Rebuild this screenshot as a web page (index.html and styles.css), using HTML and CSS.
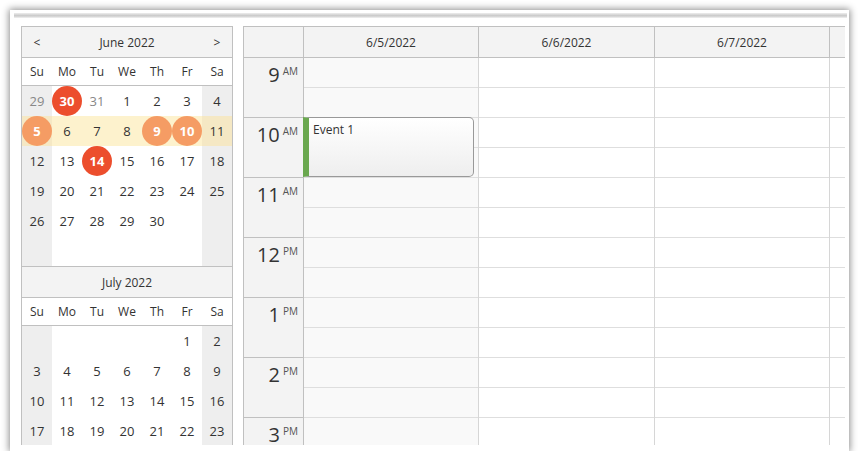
FILE: index.html
```html
<!DOCTYPE html>
<html lang="en">
<head>
  <meta charset="UTF-8" />
  <title>Calendar</title>
  <link rel="stylesheet" href="styles.css">
</head>
<body>

  <div class="frame">
    <div class="top-band"></div>
    <div class="viewport">

      <!-- date navigator -->
      <div class="nav">
        <div class="month">
          <div class="nav-title">
            <span class="arrow">&lt;</span>
            <span class="month-name">June 2022</span>
            <span class="arrow">&gt;</span>
          </div>
          <div class="day-names">
            <span>Su</span><span>Mo</span><span>Tu</span><span>We</span><span>Th</span><span>Fr</span><span>Sa</span>
          </div>
          <div class="week">
            <span class="we other">29</span><span><b class="dot red">30</b></span><span class="other">31</span><span>1</span><span>2</span><span>3</span><span class="we">4</span>
          </div>
          <div class="week sel">
            <span class="we"><b class="dot orange">5</b></span><span>6</span><span>7</span><span>8</span><span><b class="dot orange">9</b></span><span><b class="dot orange">10</b></span><span class="we">11</span>
          </div>
          <div class="week">
            <span class="we">12</span><span>13</span><span><b class="dot red">14</b></span><span>15</span><span>16</span><span>17</span><span class="we">18</span>
          </div>
          <div class="week">
            <span class="we">19</span><span>20</span><span>21</span><span>22</span><span>23</span><span>24</span><span class="we">25</span>
          </div>
          <div class="week">
            <span class="we">26</span><span>27</span><span>28</span><span>29</span><span>30</span><span></span><span class="we"></span>
          </div>
          <div class="week">
            <span class="we"></span><span></span><span></span><span></span><span></span><span></span><span class="we"></span>
          </div>
        </div>

        <div class="month">
          <div class="nav-title">
            <span class="arrow"></span>
            <span class="month-name">July 2022</span>
            <span class="arrow"></span>
          </div>
          <div class="day-names">
            <span>Su</span><span>Mo</span><span>Tu</span><span>We</span><span>Th</span><span>Fr</span><span>Sa</span>
          </div>
          <div class="week">
            <span class="we"></span><span></span><span></span><span></span><span></span><span>1</span><span class="we">2</span>
          </div>
          <div class="week">
            <span class="we">3</span><span>4</span><span>5</span><span>6</span><span>7</span><span>8</span><span class="we">9</span>
          </div>
          <div class="week">
            <span class="we">10</span><span>11</span><span>12</span><span>13</span><span>14</span><span>15</span><span class="we">16</span>
          </div>
          <div class="week">
            <span class="we">17</span><span>18</span><span>19</span><span>20</span><span>21</span><span>22</span><span class="we">23</span>
          </div>
        </div>
      </div>

      <!-- week view -->
      <div class="cal">
        <div class="cal-head corner"></div>
        <div class="cal-head">6/5/2022</div>
        <div class="cal-head">6/6/2022</div>
        <div class="cal-head">6/7/2022</div>
        <div class="cal-head strip"></div>

        <div class="times" id="times"></div>
        <div class="day off" id="day1">
          <div class="event">Event 1</div>
        </div>
        <div class="day" id="day2"></div>
        <div class="day" id="day3"></div>
        <div class="day strip" id="day4"></div>
      </div>

    </div>
  </div>

  <script>
    const hours = [
      ["9", "AM"], ["10", "AM"], ["11", "AM"], ["12", "PM"],
      ["1", "PM"], ["2", "PM"], ["3", "PM"]
    ];

    const times = document.getElementById("times");
    hours.forEach(([h, ap]) => {
      times.innerHTML += `<div class="hour"><span class="h">${h}</span><span class="ampm">${ap}</span></div>`;
    });

    ["day1", "day2", "day3", "day4"].forEach(id => {
      const col = document.getElementById(id);
      for (let i = 0; i < hours.length * 2; i++) {
        col.insertAdjacentHTML("beforeend", '<div class="cell"></div>');
      }
    });
  </script>

</body>
</html>
```

FILE: styles.css
```css
body {
  margin: 0;
  background: #fff;
  font-family: 'Segoe UI', 'Open Sans', sans-serif;
  font-size: 12px;
  color: #333;
}

.frame {
  margin: 10px 0 0 10px;
  width: 839px;
  height: 441px;
  background: #fff;
  box-shadow: 0 0 7px 1px rgba(0, 0, 0, 0.45);
  overflow: hidden;
}

.top-band {
  height: 5px;
  margin: 3px 2px 0 4px;
  background: linear-gradient(to bottom, #eeeeee, #c9c9c9 55%, #f2f2f2);
}

.viewport {
  display: flex;
  gap: 10px;
  margin: 8px 0 0 11px;
  height: 419px;
  overflow: hidden;
}

/* navigator */

.nav {
  width: 210px;
  border: 1px solid #c0c0c0;
  border-bottom: none;
  flex-shrink: 0;
}

.month + .month {
  border-top: 1px solid #c0c0c0;
}

.nav-title {
  display: flex;
  height: 30px;
  align-items: center;
  background: #f3f3f3;
  border-bottom: 1px solid #c0c0c0;
}

.arrow {
  width: 30px;
  text-align: center;
}

.month-name {
  flex: 1;
  text-align: center;
}

.day-names {
  display: flex;
  height: 27px;
  align-items: center;
  border-bottom: 1px solid #c0c0c0;
}

.day-names span,
.week span {
  width: 30px;
  text-align: center;
}

.week {
  display: flex;
  height: 30px;
}

.week span {
  display: flex;
  align-items: center;
  justify-content: center;
  font-size: 13px;
}

.week .we {
  background: #eeeeee;
}

.week .other {
  color: #888;
}

.week.sel {
  background: #fdf2cd;
}

.week.sel .we {
  background: #f5e8c4;
}

.dot {
  display: flex;
  align-items: center;
  justify-content: center;
  width: 30px;
  height: 30px;
  border-radius: 50%;
  color: #fff;
  font-weight: bold;
}

.dot.red {
  background: #ec4e2d;
}

.dot.orange {
  background: #f59c64;
}

/* calendar */

.cal {
  display: grid;
  grid-template-columns: 60px 175px 176px 175px 15px;
  grid-template-rows: 31px auto;
  align-content: start;
  border-left: 1px solid #c0c0c0;
  border-top: 1px solid #c0c0c0;
  flex-shrink: 0;
}

.cal-head {
  display: flex;
  align-items: center;
  justify-content: center;
  background: #f3f3f3;
  border-bottom: 1px solid #c0c0c0;
  border-right: 1px solid #c0c0c0;
}

.cal-head.strip {
  border-right: none;
}

.times {
  background: #f3f3f3;
  border-right: 1px solid #c0c0c0;
}

.hour {
  box-sizing: border-box;
  height: 60px;
  border-bottom: 1px solid #c0c0c0;
  display: flex;
  justify-content: flex-end;
  align-items: flex-start;
  padding: 4px 5px 0 0;
}

.hour .h {
  font-size: 20px;
  line-height: 26px;
}

.hour .ampm {
  font-size: 10px;
  line-height: 14px;
  margin-left: 3px;
  margin-top: 2px;
  color: #555;
}

.day {
  position: relative;
  background: #fff;
  border-right: 1px solid #d6d6d6;
}

.day.off {
  background: #f9f9f9;
}

.day.strip {
  border-right: none;
}

.cell {
  box-sizing: border-box;
  height: 30px;
  border-bottom: 1px solid #dedede;
}

.event {
  position: absolute;
  top: 59px;
  left: -1px;
  width: 171px;
  height: 60px;
  box-sizing: border-box;
  padding: 3px 0 0 4px;
  border: 1px solid #999;
  border-left: 6px solid #6aa84f;
  border-radius: 0 5px 5px 0;
  background: linear-gradient(to bottom, #ffffff, #eeeeee);
  color: #333;
}
```
